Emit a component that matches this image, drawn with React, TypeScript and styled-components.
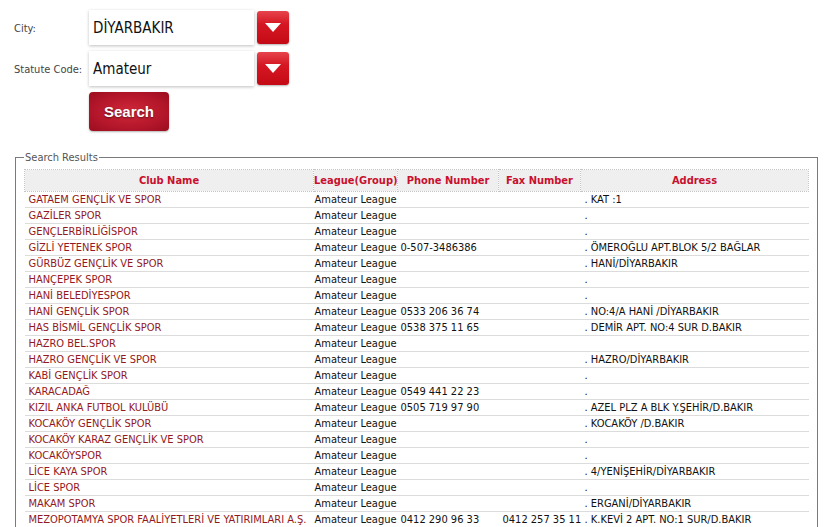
import React from "react";
import styled, { createGlobalStyle } from "styled-components";

const GlobalStyle = createGlobalStyle`
  html, body {
    margin: 0;
    padding: 0;
    background: #ffffff;
    font-family: "DejaVu Sans Condensed", "DejaVu Sans", sans-serif;
    font-size: 11px;
    color: #222;
  }
`;

const Page = styled.div`
  padding: 10px 14px 0 14px;
`;

const Form = styled.div`
  display: grid;
  grid-template-columns: 75px auto;
  row-gap: 6px;
  align-items: center;
  justify-content: start;
`;

const Label = styled.label`
  color: #444;
  font-size: 11px;
  margin-top: 2px;
`;

const SelectWrap = styled.div`
  display: flex;
  align-items: flex-start;
  gap: 3px;
`;

const SelectBox = styled.div`
  width: 165px;
  height: 35px;
  box-sizing: border-box;
  padding-left: 4px;
  display: flex;
  align-items: center;
  font-size: 15px;
  color: #111;
  background: #fff;
  box-shadow: 0 1px 3px rgba(0, 0, 0, 0.25);
`;

const DropButton = styled.div`
  width: 32px;
  height: 33px;
  margin-top: 1px;
  border-radius: 3px;
  display: flex;
  align-items: center;
  justify-content: center;
  background: linear-gradient(#e6444c 0%, #d51723 40%, #c40a16 100%);
  box-shadow: 0 1px 2px rgba(0, 0, 0, 0.3);
`;

const SearchButton = styled.button`
  grid-column: 2;
  width: 80px;
  height: 39px;
  border: none;
  border-radius: 4px;
  background: radial-gradient(ellipse at center, #d0283a 0%, #b4162a 60%, #9a0e1e 100%);
  box-shadow: 0 1px 2px rgba(0, 0, 0, 0.3);
  color: #fff;
  font-family: "Liberation Sans", Arial, sans-serif;
  font-weight: bold;
  font-size: 15px;
  text-shadow: 0 1px 2px rgba(0, 0, 0, 0.5);
  padding: 0;
`;

const Results = styled.fieldset`
  margin: 20px 0 0 1px;
  width: 803px;
  min-width: 0;
  box-sizing: border-box;
  border: 1px solid #7a7a7a;
  border-bottom: none;
  padding: 5px 8px 0 8px;
`;

const Legend = styled.legend`
  color: #555;
  font-size: 11px;
  padding: 0 1px;
  margin-left: 0;
`;

const Table = styled.table`
  width: 784px;
  border-collapse: collapse;
  table-layout: fixed;
`;

const Th = styled.th`
  height: 21px;
  padding: 0;
  background: #efefef;
  border: 1px dotted #c4c4c4;
  color: #c8102e;
  font-weight: bold;
  font-size: 11px;
  text-align: center;
  white-space: nowrap;
  overflow: hidden;
`;

const Td = styled.td<{ $club?: boolean; $pad: number }>`
  height: 15px;
  padding: 0 0 0 ${(p) => p.$pad}px;
  border-bottom: 1px solid #dcdcdc;
  white-space: nowrap;
  overflow: visible;
  color: ${(p) => (p.$club ? "#931822" : "#111")};
  font-size: 11px;
  line-height: 15px;
`;

const columns = [
  { title: "Club Name", w: 289 },
  { title: "League(Group)", w: 84 },
  { title: "Phone Number", w: 101 },
  { title: "Fax Number", w: 82 },
  { title: "Address", w: 228 },
];

const rows: [string, string, string, string][] = [
  ["GATAEM GENÇLİK VE SPOR", "", "", ". KAT :1"],
  ["GAZİLER SPOR", "", "", "."],
  ["GENÇLERBİRLİĞİSPOR", "", "", "."],
  ["GİZLİ YETENEK SPOR", "0-507-3486386", "", ". ÖMEROĞLU APT.BLOK 5/2 BAĞLAR"],
  ["GÜRBÜZ GENÇLİK VE SPOR", "", "", ". HANİ/DİYARBAKIR"],
  ["HANÇEPEK SPOR", "", "", "."],
  ["HANİ BELEDİYESPOR", "", "", "."],
  ["HANİ GENÇLİK SPOR", "0533 206 36 74", "", ". NO:4/A HANİ /DİYARBAKIR"],
  ["HAS BİSMİL GENÇLİK SPOR", "0538 375 11 65", "", ". DEMİR APT. NO:4 SUR D.BAKIR"],
  ["HAZRO BEL.SPOR", "", "", ""],
  ["HAZRO GENÇLİK VE SPOR", "", "", ". HAZRO/DİYARBAKIR"],
  ["KABİ GENÇLİK SPOR", "", "", "."],
  ["KARACADAĞ", "0549 441 22 23", "", "."],
  ["KIZIL ANKA FUTBOL KULÜBÜ", "0505 719 97 90", "", ". AZEL PLZ A BLK Y.ŞEHİR/D.BAKIR"],
  ["KOCAKÖY GENÇLİK SPOR", "", "", ". KOCAKÖY /D.BAKIR"],
  ["KOCAKÖY KARAZ GENÇLİK VE SPOR", "", "", "."],
  ["KOCAKÖYSPOR", "", "", "."],
  ["LİCE KAYA SPOR", "", "", ". 4/YENİŞEHİR/DİYARBAKIR"],
  ["LİCE SPOR", "", "", "."],
  ["MAKAM SPOR", "", "", ". ERGANİ/DİYARBAKIR"],
  ["MEZOPOTAMYA SPOR FAALİYETLERİ VE YATIRIMLARI A.Ş.", "0412 290 96 33", "0412 257 35 11", ". K.KEVİ 2 APT. NO:1 SUR/D.BAKIR"],
];

function Arrow(): JSX.Element {
  return (
    <svg width="16" height="9" viewBox="0 0 16 9">
      <path d="M0 0 H16 L8 9 Z" fill="#fff" />
    </svg>
  );
}

function Select({ value }: { value: string }): JSX.Element {
  return (
    <SelectWrap>
      <SelectBox>{value}</SelectBox>
      <DropButton>
        <Arrow />
      </DropButton>
    </SelectWrap>
  );
}

export default function App(): JSX.Element {
  return (
    <>
      <GlobalStyle />
      <Page>
        <Form>
          <Label>City:</Label>
          <Select value="DİYARBAKIR" />
          <Label>Statute Code:</Label>
          <Select value="Amateur" />
          <SearchButton>Search</SearchButton>
        </Form>
        <Results>
          <Legend>Search Results</Legend>
          <Table>
            <colgroup>
              {columns.map((c) => (
                <col key={c.title} style={{ width: c.w }} />
              ))}
            </colgroup>
            <thead>
              <tr>
                {columns.map((c) => (
                  <Th key={c.title}>{c.title}</Th>
                ))}
              </tr>
            </thead>
            <tbody>
              {rows.map(([club, phone, fax, address]) => (
                <tr key={club}>
                  <Td $club $pad={4}>{club}</Td>
                  <Td $pad={1}>Amateur League</Td>
                  <Td $pad={3}>{phone}</Td>
                  <Td $pad={4}>{fax}</Td>
                  <Td $pad={4}>{address}</Td>
                </tr>
              ))}
            </tbody>
          </Table>
        </Results>
      </Page>
    </>
  );
}
